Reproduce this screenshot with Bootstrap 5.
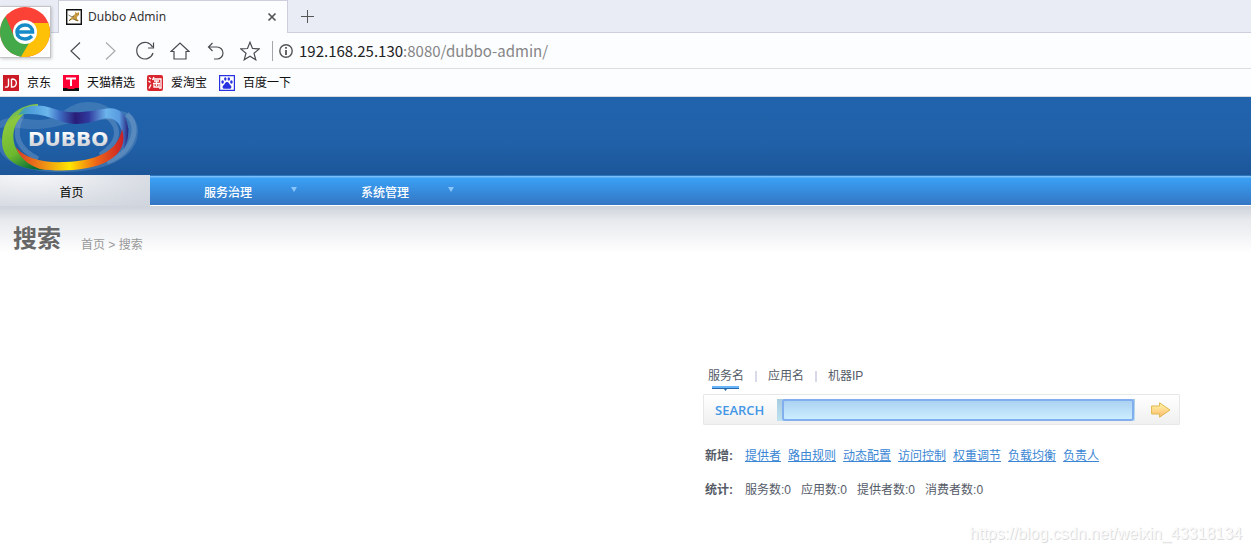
<!DOCTYPE html>
<html lang="zh-CN">
<head>
<meta charset="utf-8">
<meta name="viewport" content="width=device-width, initial-scale=1">
<title>Dubbo Admin</title>
<link href="https://cdn.jsdelivr.net/npm/bootstrap@5.3.0/dist/css/bootstrap.min.css" rel="stylesheet">
<style>
  body { font: 12px/18px "Liberation Sans", "Noto Sans CJK SC", sans-serif; color: #555b68; background: #fff; }
  svg { display: block; flex: none; }
  button { padding: 0; border: 0; background: none; color: inherit; }
  .tab-strip { height: 33px; padding-left: 58px; background: #e9ecf5; box-shadow: inset 0 -1px #cdd0dc; }
  .page-tab { width: 230px; height: 33px; padding: 0 10px 0 7px; gap: 6px; background: #fcfdff; border: 1px solid #cdd0dc; border-bottom: 0; font: 12px/18px "Noto Sans", "Open Sans", sans-serif; color: #333; }
  .new-tab { margin-left: 13px; }
  .app-logo { top: 6px; left: 0; width: 51px; height: 52px; background: #fff; border: 1px solid #c4c4c8; border-left: 0; box-shadow: 1px 1px 3px #0003; }
  .tool-row { height: 36px; padding-left: 65px; background: #fcfdff; border-bottom: 1px solid #dcdde1; color: #4a4c50; }
  .tool-buttons { gap: 15px; }
  .address { font: 15px/20px "Noto Sans CJK SC", "Open Sans", sans-serif; color: #858585; }
  .address b { font-weight: 400; color: #222; }
  .address-icon { margin: 0 6px 0 12px; padding-left: 6px; border-left: 1px solid #a5a6aa; height: 20px; }
  .marks-row { height: 28px; padding-left: 3px; gap: 12px; background: #fcfdff; border-bottom: 1px solid #d8dade; }
  .marks-row a { color: #111; text-decoration: none; gap: 8px; }
  .brand-bar { height: 78px; background: linear-gradient(#2164ad, #2060a8 60%, #1c5699); }
  .main-menu { height: 31px; background: linear-gradient(#2c77bf 0 1px, #78bdf8 1px 2px, #3aa0f5 3px, #3476c3); border-bottom: 1px solid #fff; }
  .main-menu a { color: #fff; text-decoration: none; height: 31px; padding-top: 4px; }
  .main-menu .home-item { width: 150px; padding-right: 7px; color: #000; background: radial-gradient(ellipse at 20% 0, #f6f7f9, #d8dce3 70%, #cfd4dd); }
  .menu-item { width: 157px; font-weight: 500; }
  .menu-item span { width: 90px; margin-left: 33px; text-align: center; }
  .menu-item svg { margin: -6px 0 0 18px; }
  .title-band { height: 47px; padding-left: 13px; gap: 20px; background: linear-gradient(#cdd2db, #e7e9ed 30%, #fff); }
  .title-band h1 { font: 700 24px/30px "Noto Sans CJK SC", sans-serif; color: #666; margin: 0; padding-top: 16px; }
  .title-band nav { padding-top: 30px; color: #999; }
  .title-band a { color: inherit; text-decoration: none; }
  .search-area { width: 477px; margin: 114px 71px 0 auto; }
  .type-tabs { height: 27px; padding-left: 5px; gap: 11px; }
  .type-tabs i { width: 2px; height: 11px; margin-top: 4px; background: #d9dae9; }
  .picked-line { left: 5px; top: 19px; }
  .search-box { height: 31px; padding: 0 8px 0 11px; border: 1px solid #e7e8ea; border-radius: 1px; background: linear-gradient(#fff, #f0f0f0); }
  .search-box label { width: 62px; font: 600 13px/18px "Open Sans", "Noto Sans", sans-serif; color: #4497e6; }
  .field-wrap { padding: 0 1px 0 5px; background: linear-gradient(#a6ccdf, #bfe2ef); }
  .field-wrap input { height: 22px; width: 100%; display: block; border: 2px solid #82aef0; border-radius: 3px; outline: 0; padding: 0 4px; background: linear-gradient(#acd2f2, #cbedff); }
  .link-row { padding-left: 2px; margin-top: 22px; }
  .stat-row { padding-left: 2px; margin-top: 16px; }
  .link-row strong, .stat-row strong { width: 40px; color: #555b66; }
  .new-links { gap: 7px; }
  .new-links a { color: #3b86d4; text-decoration: underline; }
  .counts { gap: 10px; }
  .site-note { margin: 25px 9px 0 0; font: 16px/20px "Liberation Sans", sans-serif; color: #fafafa; text-shadow: 1px 1px #dcdcdc; }
</style>
</head>
<body>
<header>
  <div class="position-relative">
    <div class="tab-strip d-flex align-items-center">
      <div class="page-tab d-flex align-items-center">
        <svg width="16" height="16" viewBox="0 0 16 16"><path fill="#fff" stroke="#111" stroke-width="1.4" d="M.7.7h14.600v14.600H.7z"/><path fill="#c99b43" d="m3 11 2-2 3-3 1-1V3l2 1 2-1v3l-2 2v2l2 2h-3l-2-2-3 1-2 1z"/><path fill="none" stroke="#5d4a25" stroke-width=".7" d="m2.500 6 3.500 2 2-1m-5 5 2-2m5-5h.5m1.500 0h.5M7 10l3 1 2 1"/></svg>
        <span class="flex-grow-1">Dubbo Admin</span>
        <button type="button" aria-label="Close tab"><svg width="10" height="10" viewBox="0 0 10 10"><path stroke="#555" stroke-width="1.7" d="m1.500 1.500 7 7m0-7-7 7"/></svg></button>
      </div>
      <button type="button" class="new-tab" aria-label="New tab"><svg width="13" height="13" viewBox="0 0 13 13"><path stroke="#555" d="M6.500 0v13M0 6.500h13"/></svg></button>
    </div>
    <div class="app-logo position-absolute">
      <svg width="50" height="50" viewBox="0 0 50 50"><circle cx="25" cy="25" r="25" fill="#fc4136"/><path fill="#ffc107" d="M48.300 16H25v20l-4 13.700A25 25 0 0 0 48.300 16"/><path fill="#44a948" d="M5.500 9.400A25 25 0 0 0 21 49.700L29 36 13 27z"/><circle cx="25" cy="25" r="12" fill="#fff"/><path fill="none" stroke="#168bc8" stroke-width="3.600" d="M17 25h15.500c0-4-3-7-7.500-7s-8 3-8 7 3 7 8 7c3 0 5-1 7-3"/></svg>
    </div>
  </div>
  <div class="tool-row d-flex align-items-center">
    <div class="tool-buttons d-flex">
      <button type="button" aria-label="Back"><svg width="20" height="20" viewBox="0 0 20 20"><path fill="none" stroke="currentColor" stroke-width="1.200" d="m15 1.500-9 8.500 9 8.500"/></svg></button>
      <button type="button" aria-label="Forward"><svg width="20" height="20" viewBox="0 0 20 20"><path fill="none" stroke="#aaa" stroke-width="1.200" d="m6 1.500 9 8.500-9 8.500"/></svg></button>
      <button type="button" aria-label="Reload"><svg width="20" height="20" viewBox="0 0 20 20"><path fill="none" stroke="currentColor" stroke-width="1.200" d="M17.500 6A8.300 8.300 0 1 0 18 12M18.500 1.500V7H13"/></svg></button>
      <button type="button" aria-label="Home"><svg width="20" height="20" viewBox="0 0 20 20"><path fill="none" stroke="currentColor" stroke-width="1.200" d="M1 10.500 10 2l9 8.500h-3v7.500H4v-7.500z"/></svg></button>
      <button type="button" aria-label="Undo"><svg width="20" height="20" viewBox="0 0 20 20"><path fill="none" stroke="currentColor" stroke-width="1.200" d="M7.500 2 3.500 6l4 4M3.500 6H12a6 6 0 0 1 0 12H9"/></svg></button>
      <button type="button" aria-label="Favourite"><svg width="20" height="20" viewBox="0 0 20 20"><path fill="none" stroke="currentColor" stroke-width="1.200" d="m10 1.200 2.500 6.300 6.800.4-5.300 4.300 1.800 6.600L10 15.200l-5.800 3.600L6 12.200.700 7.900l6.800-.4z"/></svg></button>
    </div>
    <div class="address-icon d-flex align-items-center"><svg width="14" height="14" viewBox="0 0 14 14"><circle cx="7" cy="7" r="6.200" fill="none" stroke="#555" stroke-width="1.400"/><path stroke="#555" stroke-width="1.800" d="M7 6v5M7 3v1.800"/></svg></div>
    <div class="address"><b>192.168.25.130</b>:8080/dubbo-admin/</div>
  </div>
  <nav class="marks-row d-flex align-items-center" aria-label="Bookmarks">
    <a href="#" class="d-flex align-items-center"><svg width="16" height="16" viewBox="0 0 16 16"><path fill="#cb1b27" d="M0 0h16v16H0z"/><path fill="none" stroke="#fff" stroke-width="1.400" d="M5.500 3.500V10c0 2-1.500 2.500-3.500 1.800M8.500 4v8c6.500.5 6.500-8.500 0-8"/></svg>京东</a>
    <a href="#" class="d-flex align-items-center"><svg width="16" height="16" viewBox="0 0 16 16"><path fill="#ff0036" d="M0 0h16v16H0z"/><path fill="#111" d="M0 13h4l1 1h6l1-1h4v3H0z"/><path stroke="#fff" stroke-width="2" d="M3 3.500h10M8 3v8"/></svg>天猫精选</a>
    <a href="#" class="d-flex align-items-center"><svg width="16" height="16" viewBox="0 0 16 16"><rect width="16" height="16" rx="2" fill="#d9262e"/><path fill="none" stroke="#fff" stroke-width="1.300" d="m2 2.500 2 1.500M1.500 6l2 1.500m-1.500 6 2-4M7 2 5.500 5M6 4h8v9h-2M7 6h5M6 8.500h7M9.500 6v5M7 9.500V12h5V9.500"/></svg>爱淘宝</a>
    <a href="#" class="d-flex align-items-center"><svg width="16" height="16" viewBox="0 0 16 16"><path fill="#fff" stroke="#2932e1" stroke-width="1.200" d="M.6.6h14.800v14.800H.6z"/><g fill="#2932e1"><ellipse cx="3.600" cy="7" rx="1.300" ry="1.700"/><ellipse cx="6.300" cy="4" rx="1.200" ry="1.700"/><ellipse cx="9.800" cy="4" rx="1.200" ry="1.700"/><ellipse cx="12.400" cy="7" rx="1.300" ry="1.700"/><path d="M8 7c2 0 2 2 3.500 3.200 1.800 1.500.8 4-1.500 3.600H6c-2.300.4-3.300-2.100-1.500-3.600C6 9 6 7 8 7"/></g></svg>百度一下</a>
  </nav>
</header>
<div class="brand-bar">
  <svg width="160" height="78" viewBox="0 0 160 78" role="img" aria-label="DUBBO">
    <defs>
      <linearGradient id="top"><stop stop-color="#3aa0a0"/><stop offset=".12" stop-color="#4f9fdc"/><stop offset=".27" stop-color="#6bb6ec"/><stop offset=".38" stop-color="#3d6cc2"/><stop offset=".52" stop-color="#281d78"/><stop offset=".64" stop-color="#30399d"/><stop offset=".8" stop-color="#6bb4ec"/><stop offset=".92" stop-color="#5a9be0"/><stop offset="1" stop-color="#26267f"/></linearGradient>
      <linearGradient id="low"><stop stop-color="#da3826"/><stop offset=".2" stop-color="#e97919"/><stop offset=".5" stop-color="#ffe600"/><stop offset=".75" stop-color="#ee6418"/><stop offset="1" stop-color="#ca2027"/></linearGradient>
      <linearGradient id="left" x1=".3" x2=".7" y2="1"><stop stop-color="#4fa86c"/><stop offset=".2" stop-color="#8cc83e"/><stop offset=".65" stop-color="#6cb92e"/><stop offset="1" stop-color="#066d36"/></linearGradient>
      <linearGradient id="word" x2="0" y2="1"><stop offset=".2" stop-color="#fff"/><stop offset="1" stop-color="#bfc2c9"/></linearGradient>
    </defs>
    <path fill="#8fb3d3" fill-opacity=".25" d="M0 24c14-8 28 2 48-2C62 18 70 5 88 5c12 0 20 4 25 9 16-2 25 8 25 20 0 25-28 40-72 41C30 76 8 68 0 54V40c14 22 36 28 65 27 35-1 62-13 64-35-8-15-22-8-42-8-18 0-30 8-54 8C18 32 10 28 0 31z"/>
    <path fill="none" stroke="#8fb3d3" stroke-opacity=".35" stroke-width="5" d="M22 18C12 38 18 52 38 62M100 15c20 10 24 28 0 43M127 17c14 12 7 38-20 48"/>
    <path fill="url(#left)" d="M38 7C14 8 2 25 2 44c0 20 18 29 42 29l-4-3C24 63 17 55 15 49 10 33 17 17 38 9"/>
    <path fill="url(#top)" d="M24 11C40 5 50 11 62 14c13 3 30 0 41-2 15-3 23 3 25 18 1 10-1 16-4 22l-2-2c1-6 2-10-1-18-3-10-11-12-19-10-14 5-28 7-42 2-14-5-24-9-42-6z"/>
    <path fill="url(#low)" d="M16 50c8 11 26 16 49 15 30-1 53-10 57-33 4 13 0 24-14 32-18 10-48 11-68 8-12-4-21-12-24-22"/>
    <text x="28" y="49" fill="url(#word)" font-family="DejaVu Sans, sans-serif" font-weight="700" font-size="20">DUBBO</text>
  </svg>
</div>
<nav class="main-menu d-flex" aria-label="Main">
  <a href="#" class="home-item d-flex align-items-center justify-content-center">首页</a>
  <a href="#" class="menu-item d-flex align-items-center"><span>服务治理</span><svg width="6" height="6" viewBox="0 0 6 6"><path fill="#8ac6fb" d="M0 0h6L3 5z"/></svg></a>
  <a href="#" class="menu-item d-flex align-items-center"><span>系统管理</span><svg width="6" height="6" viewBox="0 0 6 6"><path fill="#8ac6fb" d="M0 0h6L3 5z"/></svg></a>
</nav>
<div class="title-band d-flex">
  <h1>搜索</h1>
  <nav aria-label="Breadcrumb"><a href="#">首页</a> &gt; 搜索</nav>
</div>
<main>
  <div class="search-area">
    <div class="type-tabs d-flex position-relative">
      <span>服务名</span><i></i><span>应用名</span><i></i><span>机器IP</span>
      <svg class="picked-line position-absolute" width="35" height="5" viewBox="0 0 35 5"><path fill="#69b5f5" d="M4 0h27v2H4z"/><path fill="#2869ad" d="M4 2h27v1H19l-1.500 2L16 3H4z"/></svg>
    </div>
    <form class="search-box d-flex align-items-center" onsubmit="return false">
      <label for="keyword">SEARCH</label>
      <div class="field-wrap flex-grow-1"><input id="keyword" type="text"></div>
      <button type="submit" class="ms-3" aria-label="Search"><svg width="20" height="16" viewBox="0 0 20 16"><defs><linearGradient id="go" x2="0" y2="1"><stop stop-color="#fff8ab"/><stop offset="1" stop-color="#ffb96f"/></linearGradient></defs><path fill="url(#go)" stroke="#dfb94d" d="M.6 4h8V.8L19 8 8.600 15.200V12h-8z"/></svg></button>
    </form>
    <div class="link-row d-flex">
      <strong>新增:</strong>
      <div class="new-links d-flex"><a href="#">提供者</a><a href="#">路由规则</a><a href="#">动态配置</a><a href="#">访问控制</a><a href="#">权重调节</a><a href="#">负载均衡</a><a href="#">负责人</a></div>
    </div>
    <div class="stat-row d-flex">
      <strong>统计:</strong>
      <div class="counts d-flex"><span>服务数:0</span><span>应用数:0</span><span>提供者数:0</span><span>消费者数:0</span></div>
    </div>
  </div>
</main>
<footer class="site-note text-end">https://blog.csdn.net/weixin_43318134</footer>
<script src="https://cdn.jsdelivr.net/npm/bootstrap@5.3.0/dist/js/bootstrap.bundle.min.js"></script>
</body>
</html>
